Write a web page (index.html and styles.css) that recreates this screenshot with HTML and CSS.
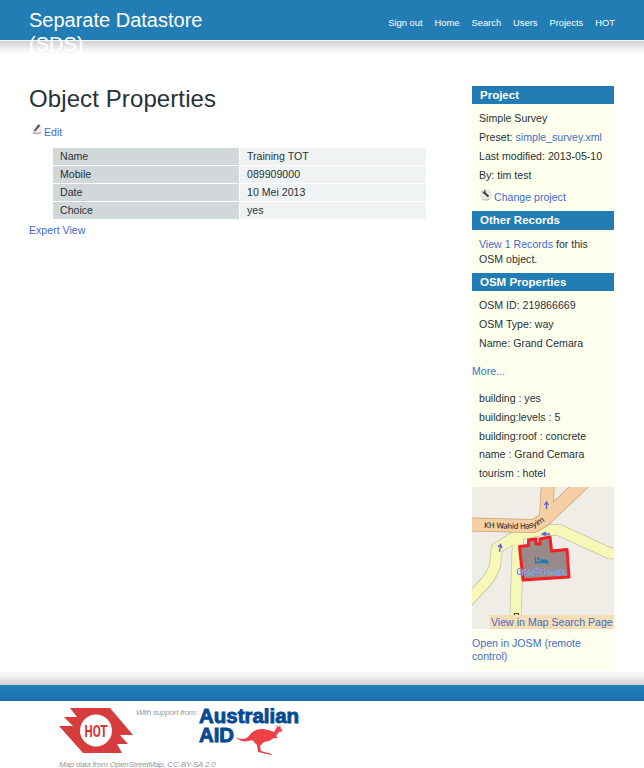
FILE: index.html
```html
<!DOCTYPE html>
<html lang="en">
<head>
<meta charset="utf-8">
<title>Separate Datastore (SDS)</title>
<link rel="stylesheet" href="styles.css">
</head>
<body>
<header class="header">
  <div class="brand">Separate Datastore (SDS)</div>
  <nav class="nav"><a>Sign out</a><a>Home</a><a>Search</a><a>Users</a><a>Projects</a><a>HOT</a></nav>
</header>
<div class="header-shadow"></div>
<div class="page">
  <main class="main">
    <h1>Object Properties</h1>
    <div class="edit"><svg class="edit-icon" width="15" height="15" viewBox="0 0 15 15"><defs><linearGradient id="disc" x1="0" y1="0" x2="0" y2="1"><stop offset="0" stop-color="#fff"/><stop offset="1" stop-color="#d4d4d4"/></linearGradient></defs><circle cx="8" cy="5.500" r="6" fill="url(#disc)" opacity=".6"/><path d="M4 10q4 1 8-.3" stroke="#aaa" stroke-width="1.300" fill="none"/><path d="M5 7.300L9.500 1.300l2 1.300L7 7.800l-2.400.8z" fill="#555"/></svg><a>Edit</a></div>
    <table class="props">
      <tr><th>Name</th><td>Training TOT</td></tr>
      <tr><th>Mobile</th><td>089909000</td></tr>
      <tr><th>Date</th><td>10 Mei 2013</td></tr>
      <tr><th>Choice</th><td>yes</td></tr>
    </table>
    <a class="expert">Expert View</a>
  </main>
  <aside class="side">
    <h2>Project</h2>
    <ul class="list project">
      <li>Simple Survey</li>
      <li>Preset: <a>simple_survey.xml</a></li>
      <li>Last modified: 2013-05-10</li>
      <li>By: tim test</li>
      <li class="change"><svg class="tool-icon" width="14" height="14" viewBox="0 0 14 14"><circle cx="7" cy="7" r="6" fill="#e9e9e3"/><path d="M3 11.500q4 1.500 8-.5" stroke="#bbb" fill="none"/><path d="M5 4.500l4.500 4" stroke="#333" stroke-width="1.700"/><path d="M2.500 3l2 1 1-.8-.5-1.700 1.500 1v2.500L4.500 5.500z" fill="#444"/></svg><a>Change project</a></li>
    </ul>
    <h2 class="tall">Other Records</h2>
    <p class="records"><a>View 1 Records</a> for this<br>OSM object.</p>
    <h2>OSM Properties</h2>
    <ul class="list osm">
      <li>OSM ID: 219866669</li>
      <li>OSM Type: way</li>
      <li>Name: Grand Cemara</li>
    </ul>
    <a class="more">More...</a>
    <ul class="list tags">
      <li>building : yes</li>
      <li>building:levels : 5</li>
      <li>building:roof : concrete</li>
      <li>name : Grand Cemara</li>
      <li>tourism : hotel</li>
    </ul>
    <div class="map">
      <svg width="142" height="142" viewBox="0 0 142 142">
        <rect width="142" height="142" fill="#f0ede7"/>
        <g fill="none" stroke-linejoin="round">
          <path d="M-5 115L14 95q8-11 9-17l2-17L48 47 69 43l18 0 50 23 10 1M46 52L43 145" stroke="#c4c4a2" stroke-width="12"/>
          <path d="M-5 115L14 95q8-11 9-17l2-17L48 47 69 43l18 0 50 23 10 1M46 52L43 145" stroke="#f7f7b8" stroke-width="10.500"/>
          <path d="M-5 37.500L62 39 72 33 112-5M74 31L76-5" stroke="#c9a27a" stroke-width="14"/>
          <path d="M-5 37.500L62 39 72 33 112-5M74 31L76-5" stroke="#f6d0a4" stroke-width="12.500"/>
        </g>
        <path d="M47.500 59.500l9-1V53l7.500-1v5h4v-5l10-2 1.500 14L95 62.500 97 90l-46 3z" fill="#9a8989" stroke="#f32126" stroke-width="3" stroke-linejoin="round"/>
        <path d="M63.500 70v7M63.500 75.500h12.500v2" stroke="#217eb5" stroke-width="1.300" fill="none"/><circle cx="66.500" cy="72" r="1.400" fill="#217eb5"/><path d="M69 72l7 1v2h-8z" fill="#217eb5"/>
        <g stroke="#5960d8" stroke-width="1.300" fill="none"><path d="M74.500 22v-7M72.500 18l2-3 2 3M27.500 65l1-7M26 60l2.500-2.500L30 61M78 47h-7M74 45l-4 2 4 1.500"/></g>
        <text class="place" x="44.500" y="88" textLength="50" lengthAdjust="spacingAndGlyphs">Grand Cemara</text>
        <path id="street" d="M12 41L48 42Q64 43 76 31"/>
        <text class="street"><textPath href="#street" textLength="63">KH Wahid Hasyim</textPath></text>
        <path d="M42.500 128v-1.500h4v1.500" fill="none" stroke="#444" stroke-width="1.200"/>
      </svg>
      <a class="map-link">View in Map Search Page</a>
    </div>
    <a class="josm">Open in JOSM (remote<br>control)</a>
  </aside>
</div>
<div class="footer-shadow"></div>
<div class="footer-bar"></div>
<footer class="footer">
  <div class="logos">
    <svg class="hot" width="75" height="46" viewBox="0 0 75 46"><path d="M11 0H51L74 27H61L69 36H58L63 45H24L0 18H14L5 9H18z" fill="#d63c3d"/><circle cx="37" cy="22.500" r="16" fill="#fff"/><text x="25.500" y="28.500" textLength="23" lengthAdjust="spacingAndGlyphs">HOT</text></svg>
    <span class="support">With support from:</span>
    <svg class="aid" width="104" height="47" viewBox="0 0 104 47"><text x="1" y="14.500" textLength="100" lengthAdjust="spacingAndGlyphs">Australian</text><text x="1" y="33.500" textLength="35" lengthAdjust="spacingAndGlyphs">AID</text><path d="M38 29q6 4 12 0 6-9 15-8 7 1 11 3l3-5-1-2 3 2 1-2 1 4 2 2-4 1-3 4 2 2-4 0-5 3-5 1-4 4 1 5 11 3-1 1-13-3-1-7-5-5q-11 4-16-3z" fill="#ee4048"/></svg>
  </div>
  <p class="credit">Map data from OpenStreetMap, CC-BY-SA 2.0</p>
</footer>
</body>
</html>
```
FILE: styles.css
```css
* { box-sizing: border-box; }
body { margin: 0; height: 768px; overflow: hidden; background: #fff; color: #263238; font: 10.600px/12px "Liberation Sans", Arial, sans-serif; }
a { color: #416ccf; }
h1, h2, p, ul { margin: 0; padding: 0; font-weight: normal; }
.header { height: 40px; background: #217db3; display: flex; justify-content: space-between; padding: 0 29px; }
.brand { width: 190px; padding-top: 8px; font-size: 20px; line-height: 24px; color: #fff; position: relative; z-index: 1; }
.nav { display: flex; padding-top: 17px; font-size: 9.350px; gap: 12px; }
.nav a { color: #fff; }
.header-shadow { height: 15px; border-top: 1px solid #f4f7f9; background: linear-gradient(#d0d0d0, #f3f3f3 60%, #fff); }
.page { height: 615px; display: flex; justify-content: space-between; padding: 31px 30px 0 29px; }
.main { width: 397px; }
h1 { font-size: 24px; line-height: 28px; margin-top: -1px; letter-spacing: .1px; }
.edit { display: flex; height: 17px; margin-top: 10px; }
.edit a { padding-top: 3px; }
.props { border-collapse: separate; border-spacing: 0; width: 373px; margin: 8px 0 0 24px; table-layout: fixed; }
.props th, .props td { height: 18px; padding: 0 7px; line-height: 17px; border-bottom: 1px solid #fff; text-align: left; font-weight: normal; }
.props th { width: 187px; background: #d2d8da; border-right: 1px solid #fff; }
.props td { background: #eff3f4; }
.expert { display: block; margin-top: 4px; }
.side { width: 142px; height: 584px; background: #ffffee; }
.side h2 { height: 18px; padding-left: 8px; background: #217db3; color: #fff; font: bold 11.500px/18px "Liberation Sans", Arial, sans-serif; }
.side .tall { height: 19px; }
.list { list-style: none; padding-left: 7px; white-space: nowrap; }
.list li { height: 19px; line-height: 19px; }
.project { height: 107px; padding-top: 5px; }
.project .change { display: flex; padding-top: 3px; height: 24px; }
.change a { line-height: 18px; margin-left: 1px; }
.records { height: 43px; padding: 7px 0 0 7px; line-height: 15px; }
.osm { padding-top: 5px; height: 73px; }
.more { display: block; height: 24px; margin-top: 1px; }
.tags { height: 98px; }
.tags li { height: 18.800px; }
.map { position: relative; height: 142px; overflow: hidden; }
.map svg { display: block; }
.map-link { position: absolute; right: 0; bottom: 0; width: 124px; height: 14px; padding-left: 1px; background: #f5deb3; line-height: 15px; white-space: nowrap; }
.place { font: 8.500px "Noto Sans", sans-serif; fill: #396fd0; stroke: #d5d9ee; stroke-width: .6px; paint-order: stroke; }
.street { font: 7.800px "DejaVu Sans", sans-serif; fill: #1c1a18; }
#street { fill: none; }
.josm { display: block; margin-top: 8px; line-height: 13px; }
.footer-shadow { height: 15px; background: linear-gradient(#fff, #f3f3f3 40%, #d0d0d0); }
.footer-bar { height: 16px; background: linear-gradient(#2383b8, #1b6dac); }
.footer { padding: 7px 0 0 59px; color: #999; font-style: italic; font-size: 8px; letter-spacing: -.22px; }
.logos { display: flex; height: 50px; }
.hot text { font: bold 16px "Roboto", sans-serif; fill: #d72f32; letter-spacing: 0; }
.support { width: 62px; white-space: nowrap; margin-left: 2px; line-height: 10px; }
.aid text { font: bold 19.500px "Liberation Sans", sans-serif; fill: #064b91; stroke: #064b91; stroke-width: .9px; letter-spacing: 0; }
.credit { line-height: 14px; }
```
